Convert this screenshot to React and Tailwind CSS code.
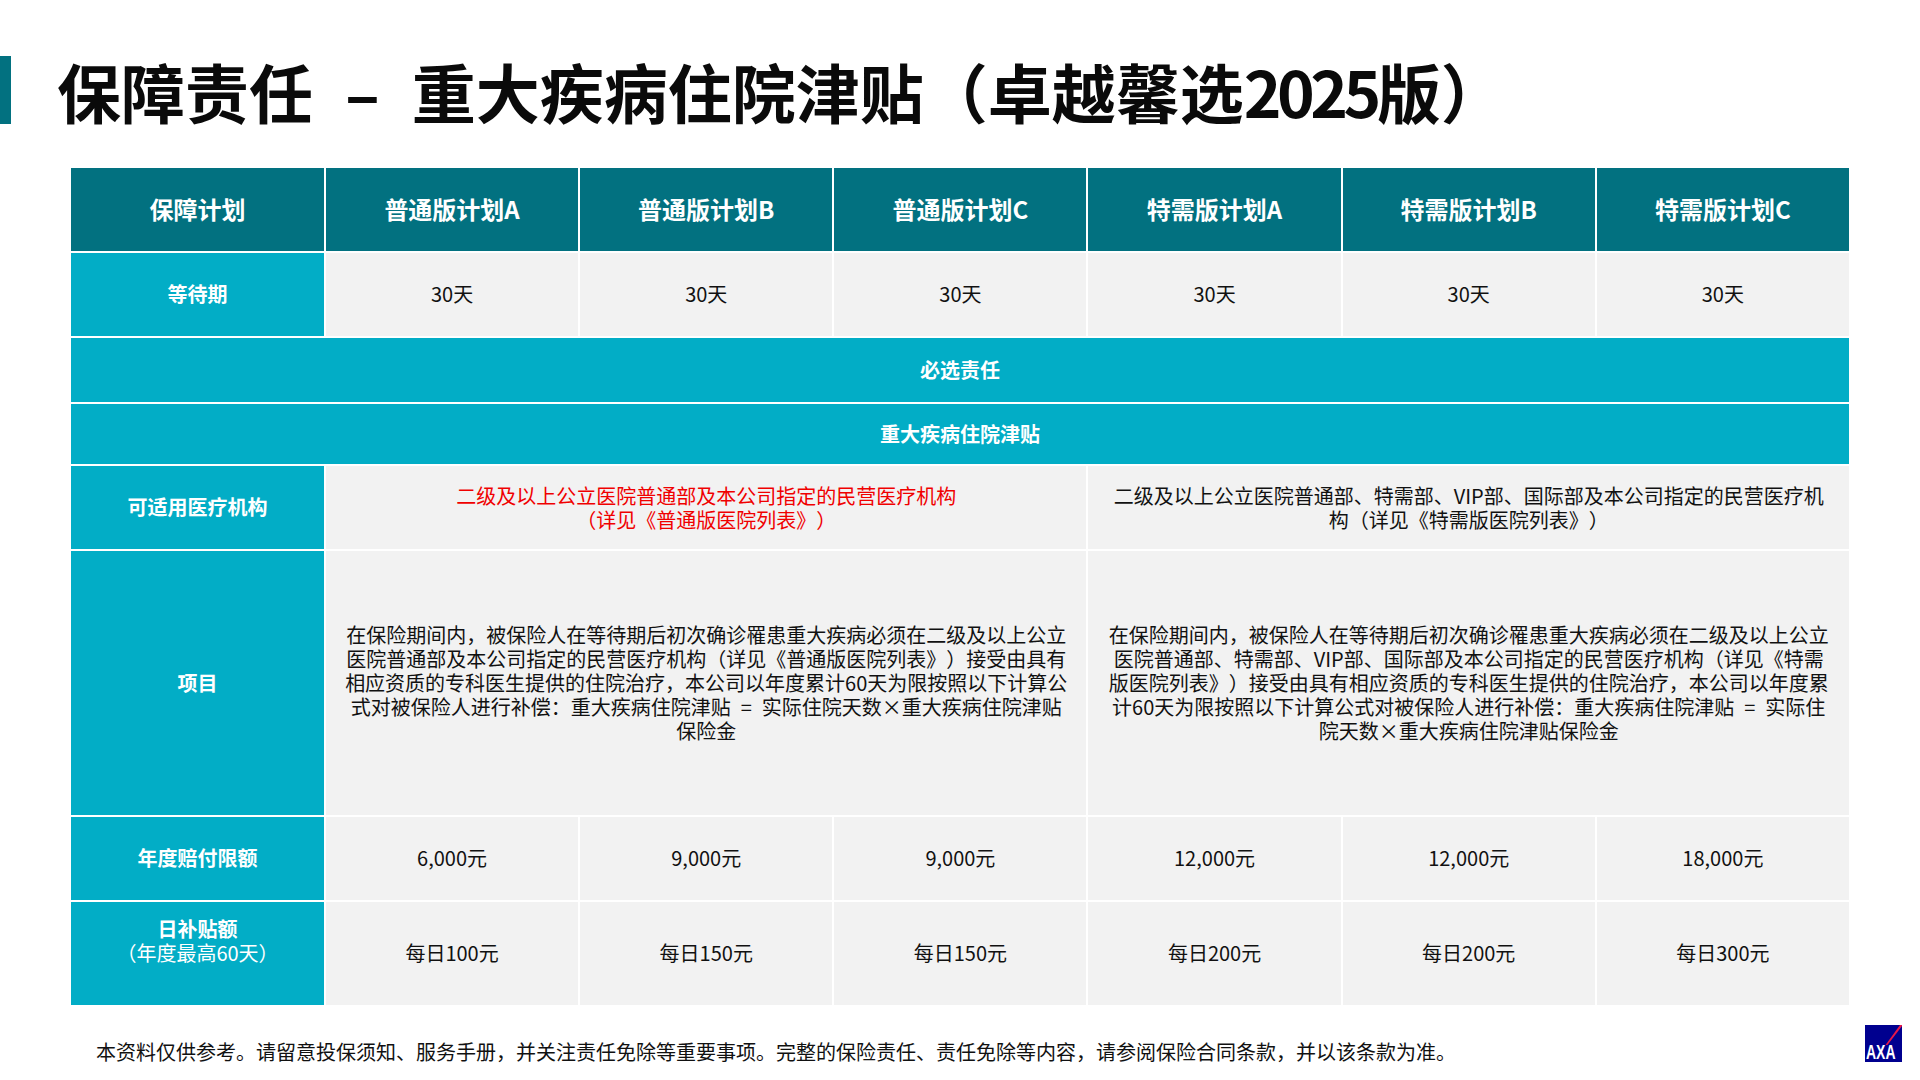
import React from "react";

const font = "font-['Noto_Sans_CJK_SC','Noto_Sans',sans-serif]";

const plans = ["普通版计划A", "普通版计划B", "普通版计划C", "特需版计划A", "特需版计划B", "特需版计划C"];
const limits = ["6,000元", "9,000元", "9,000元", "12,000元", "12,000元", "18,000元"];
const daily = ["每日100元", "每日150元", "每日150元", "每日200元", "每日200元", "每日300元"];

const Label = ({ children, className = "" }) => (
  <td className={`border-2 border-white bg-[#02adc6] text-center text-[20px] leading-6 font-bold text-white ${className}`}>
    {children}
  </td>
);

const Cell = ({ children, span = 1, className = "" }) => (
  <td colSpan={span} className={`border-2 border-white bg-[#f2f2f2] text-center text-[20px] leading-6 text-[#111] ${className}`}>
    {children}
  </td>
);

const Band = ({ children }) => (
  <td colSpan={7} className="border-2 border-white bg-[#02adc6] text-center text-[20px] leading-6 font-bold text-white">
    {children}
  </td>
);

const Eq = () => <span className="mx-[10px]">=</span>;

const AxaLogo = () => (
  <svg viewBox="0 0 37 37" className="h-[37px] w-[37px]">
    <rect width="37" height="37" fill="#00008f" />
    <polygon points="35,0 37,0 37,1 22.5,20 20.5,20" fill="#e8174a" />
    <text transform="translate(1 34) scale(1 1.5)" fontFamily="Liberation Sans" fontWeight="700" fontSize="14" fill="#fff">
      AXA
    </text>
  </svg>
);

export default function App() {
  return (
    <div className={`flex h-[1080px] w-[1920px] flex-col overflow-hidden bg-white [text-spacing-trim:space-all] ${font}`}>
      <header className="mt-[56px] flex h-[68px] items-center">
        <div className="h-full w-[11px] bg-[#027180]" />
        <h1 className="ml-[46px] text-[64px] leading-none font-bold whitespace-nowrap text-[#0a0a0a]">
          保障责任<span className="mx-[32px]">–</span>重大疾病住院津贴（卓越馨选<span className="tracking-[-4.5px]">2025</span>版）
        </h1>
      </header>

      <table className="mt-[42px] ml-[69px] w-[1780px] table-fixed border-collapse">
        <colgroup>
          <col className="w-[255px]" />
          <col span={6} className="w-[254.17px]" />
        </colgroup>
        <tbody>
          <tr className="h-[85px]">
            <th className="border-2 border-white bg-[#027180] pb-[2px] text-[24px] font-bold text-white">保障计划</th>
            {plans.map((p, i) => (
              <th key={i} className="border-2 border-white bg-[#027180] pb-[2px] text-[24px] font-bold text-white">{p}</th>
            ))}
          </tr>
          <tr className="h-[85px]">
            <Label className="pb-[2px]">等待期</Label>
            {plans.map((p, i) => (
              <Cell key={i} className="pb-[2px]">30天</Cell>
            ))}
          </tr>
          <tr className="h-[66px]"><Band>必选责任</Band></tr>
          <tr className="h-[62px]"><Band>重大疾病住院津贴</Band></tr>
          <tr className="h-[85px]">
            <Label className="pb-[2px]">可适用医疗机构</Label>
            <Cell span={3} className="text-[#f00000]">
              二级及以上公立医院普通部及本公司指定的民营医疗机构<br />（详见《普通版医院列表》）
            </Cell>
            <Cell span={3}>
              二级及以上公立医院普通部、特需部、VIP部、国际部及本公司指定的民营医疗机<br />构（详见《特需版医院列表》）
            </Cell>
          </tr>
          <tr className="h-[266px]">
            <Label>项目</Label>
            <Cell span={3} className="whitespace-nowrap">
              在保险期间内，被保险人在等待期后初次确诊罹患重大疾病必须在二级及以上公立<br />
              医院普通部及本公司指定的民营医疗机构（详见《普通版医院列表》）接受由具有<br />
              相应资质的专科医生提供的住院治疗，本公司以年度累计60天为限按照以下计算公<br />
              式对被保险人进行补偿：重大疾病住院津贴<Eq />实际住院天数×重大疾病住院津贴<br />
              保险金
            </Cell>
            <Cell span={3} className="whitespace-nowrap">
              在保险期间内，被保险人在等待期后初次确诊罹患重大疾病必须在二级及以上公立<br />
              医院普通部、特需部、VIP部、国际部及本公司指定的民营医疗机构（详见《特需<br />
              版医院列表》）接受由具有相应资质的专科医生提供的住院治疗，本公司以年度累<br />
              计60天为限按照以下计算公式对被保险人进行补偿：重大疾病住院津贴<Eq />实际住<br />
              院天数×重大疾病住院津贴保险金
            </Cell>
          </tr>
          <tr className="h-[85px]">
            <Label className="pb-[2px]">年度赔付限额</Label>
            {limits.map((v, i) => (
              <Cell key={i} className="pb-[2px]">{v}</Cell>
            ))}
          </tr>
          <tr className="h-[105px]">
            <Label className="pb-[25px]">
              日补贴额<br /><span className="font-normal">（年度最高60天）</span>
            </Label>
            {daily.map((v, i) => (
              <Cell key={i} className="pb-[2px]">{v}</Cell>
            ))}
          </tr>
        </tbody>
      </table>

      <footer className="mt-[18px] flex items-start justify-between pr-[18px] pl-[96px]">
        <p className="mt-[15px] text-[20px] leading-6 whitespace-nowrap text-[#111]">
          本资料仅供参考。请留意投保须知、服务手册，并关注责任免除等重要事项。完整的保险责任、责任免除等内容，请参阅保险合同条款，并以该条款为准。
        </p>
        <AxaLogo />
      </footer>
    </div>
  );
}
